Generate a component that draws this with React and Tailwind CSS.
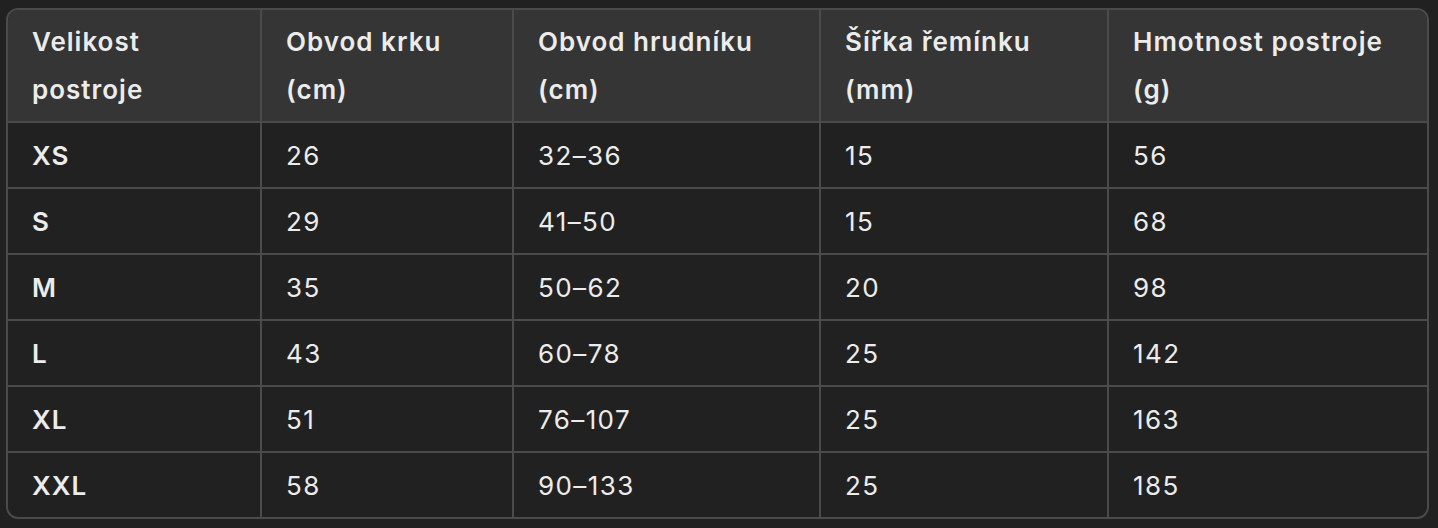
export default function App() {
  const headers = [
    ["Velikost", "postroje"],
    ["Obvod krku", "(cm)"],
    ["Obvod hrudníku", "(cm)"],
    ["Šířka řemínku", "(mm)"],
    ["Hmotnost postroje", "(g)"],
  ];
  const rows = [
    ["XS", "26", "32–36", "15", "56"],
    ["S", "29", "41–50", "15", "68"],
    ["M", "35", "50–62", "20", "98"],
    ["L", "43", "60–78", "25", "142"],
    ["XL", "51", "76–107", "25", "163"],
    ["XXL", "58", "90–133", "25", "185"],
  ];
  return (
    <div
      className="w-[1438px] h-[528px] bg-[#212121] pt-[8px] pl-[6px] text-[#ececec]"
      style={{ fontFamily: "Inter, 'Noto Sans', sans-serif" }}
    >
      <div className="w-[1423px] rounded-[12px] border-2 border-[#4b4b4b] overflow-hidden">
        <div className="grid grid-cols-[252px_252px_307px_288px_320px] text-[26px] leading-[48px]">
          {headers.map((h, i) => (
            <div
              key={i}
              className={
                "bg-[#353535] pt-[8px] pb-[7px] px-6 font-semibold tracking-[1px] whitespace-nowrap " +
                (i > 0 ? "border-l-2 border-[#4b4b4b]" : "")
              }
            >
              {h[0]}
              <br />
              {h[1]}
            </div>
          ))}
          {rows.map((r, ri) =>
            r.map((c, ci) => (
              <div
                key={ri + "-" + ci}
                className={
                  "border-t-2 border-[#4b4b4b] pt-[9px] pb-[7px] px-6 whitespace-nowrap " +
                  (ci > 0 ? "border-l-2 tracking-[1.4px] " : "font-semibold tracking-[1px] ")
                }
              >
                {c}
              </div>
            ))
          )}
        </div>
      </div>
    </div>
  );
}
